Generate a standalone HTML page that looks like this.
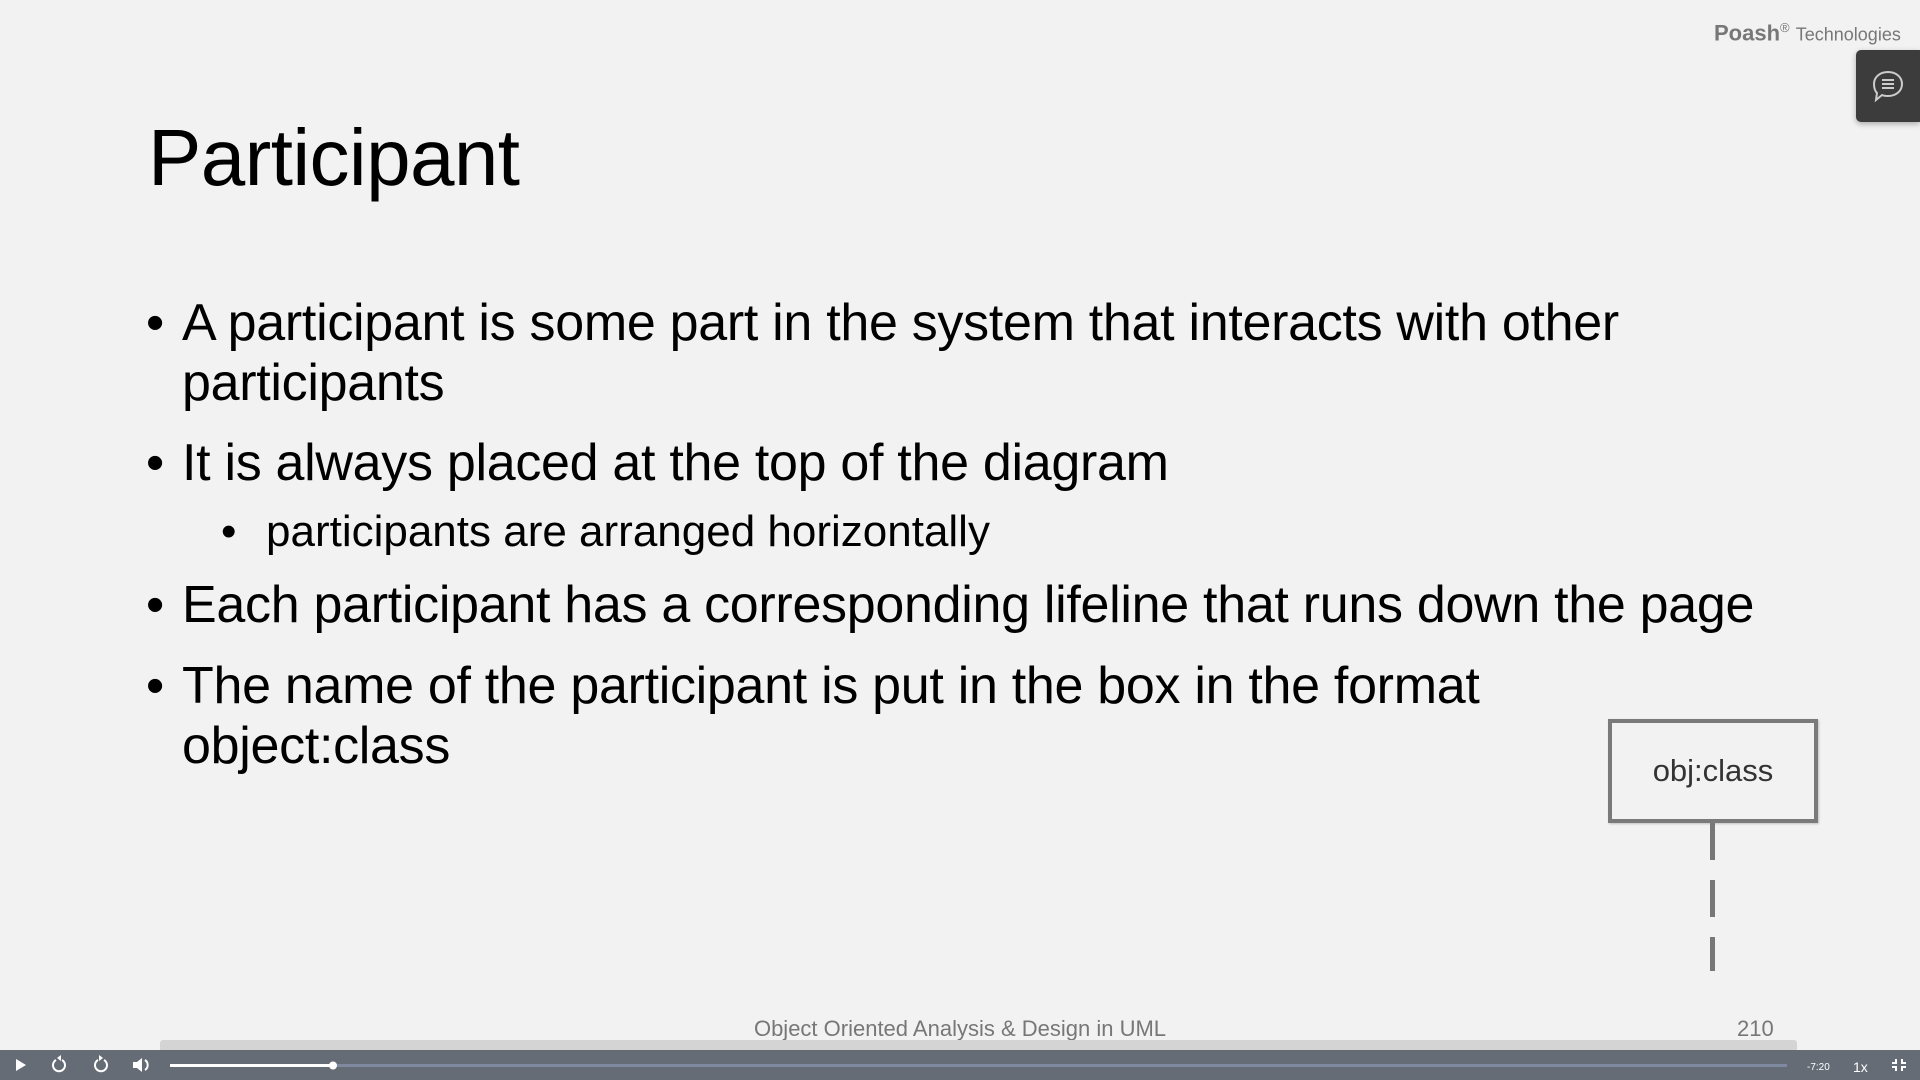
<!DOCTYPE html>
<html><head><meta charset="utf-8"><style>
body{margin:0;width:1920px;height:1080px;background:#f2f2f2;position:relative;overflow:hidden;font-family:"Liberation Sans",sans-serif;color:#000}
.a{position:absolute;white-space:nowrap}
.t{font-size:80px;left:148px;top:112px;letter-spacing:-0.6px}
.b{font-size:52px;left:182px;letter-spacing:-0.3px}
.b:before{content:"•";position:absolute;left:-36px}
.p{font-size:52px;left:182px;letter-spacing:-0.3px}
.s{font-size:44px;left:266px;letter-spacing:0px}
.s:before{content:"•";position:absolute;left:-45px}
</style></head><body>
<div class="a" style="left:1714px;top:20px;font-size:22px;color:#777"><b>Poash</b><sup style="font-size:13px">®</sup> <span style="font-size:18px">Technologies</span></div>
<div class="a" style="left:1856px;top:50px;width:64px;height:72px;background:#3c3c3c;border-radius:5px 0 0 5px;box-shadow:0 2px 6px rgba(0,0,0,.3)">
<svg width="64" height="72" viewBox="0 0 64 72"><path d="M32 22c8 0 14 5 14 12s-6 12-14 12c-2 0-4 0-6-1l-6 5 1-7c-2-2-3-6-3-9 0-7 6-12 14-12z" fill="none" stroke="#ccc" stroke-width="2"/><path d="M26 30h12M26 34h12M26 38h12" stroke="#ccc" stroke-width="2"/></svg></div>
<div class="a t">Participant</div>
<div class="a b" style="top:293px">A participant is some part in the system that interacts with other</div>
<div class="a p" style="top:353px">participants</div>
<div class="a b" style="top:433px">It is always placed at the top of the diagram</div>
<div class="a s" style="top:507px">participants are arranged horizontally</div>
<div class="a b" style="top:575px">Each participant has a corresponding lifeline that runs down the page</div>
<div class="a b" style="top:656px">The name of the participant is put in the box in the format</div>
<div class="a p" style="top:716px">object:class</div>
<div class="a" style="left:1608px;top:719px;width:202px;height:96px;border:4px solid #7a7a7a;box-sizing:content-box;font-size:31px;color:#333;text-align:center;line-height:96px;box-shadow:1px 1px 2px rgba(0,0,0,.2)">obj:class</div>
<div class="a" style="left:1710px;top:823px;width:5px;height:148px;background:repeating-linear-gradient(#777 0 37px,transparent 37px 57px)"></div>
<div class="a" style="left:0;width:1920px;text-align:center;top:1016px;font-size:22px;color:#777">Object Oriented Analysis &amp; Design in UML</div>
<div class="a" style="left:1737px;top:1016px;font-size:22px;color:#777">210</div>
<div class="a" style="left:160px;top:1040px;width:1637px;height:12px;background:#d4d4d4;border-radius:3px 3px 0 0"></div>
<div class="a" style="left:0;top:1050px;width:1920px;height:30px;background:#656c75"></div>
<svg class="a" style="left:0;top:1050px" width="1920" height="30">
<path d="M16 9l10 6-10 6z" fill="#fff"/>
<g fill="none" stroke="#fff" stroke-width="2"><path d="M56 10a6 6 0 1 0 6 0"/><path d="M104 10a6 6 0 1 1 -6 0"/></g>
<path d="M57 8l4-3v6z M103 8l-4-3v6z" fill="#fff"/>
<path d="M133 12h4l5-4v14l-5-4h-4z" fill="#fff"/><path d="M145 10a6 6 0 0 1 0 10" stroke="#fff" stroke-width="2" fill="none"/>
<rect x="333" y="14" width="1454" height="3" fill="#7f8aa0"/>
<rect x="170" y="14" width="163" height="3" fill="#fff"/>
<circle cx="333" cy="15.5" r="4" fill="#fff"/>
<text x="1807" y="20" font-size="10" fill="#fff" font-family="Liberation Sans">-7:20</text>
<text x="1853" y="22" font-size="14" fill="#fff" font-family="Liberation Sans">1x</text>
<path d="M1896 9v4h-4M1902 9v4h4M1896 21v-4h-4M1902 21v-4h4" stroke="#fff" stroke-width="2" fill="none"/>
</svg>
</body></html>
